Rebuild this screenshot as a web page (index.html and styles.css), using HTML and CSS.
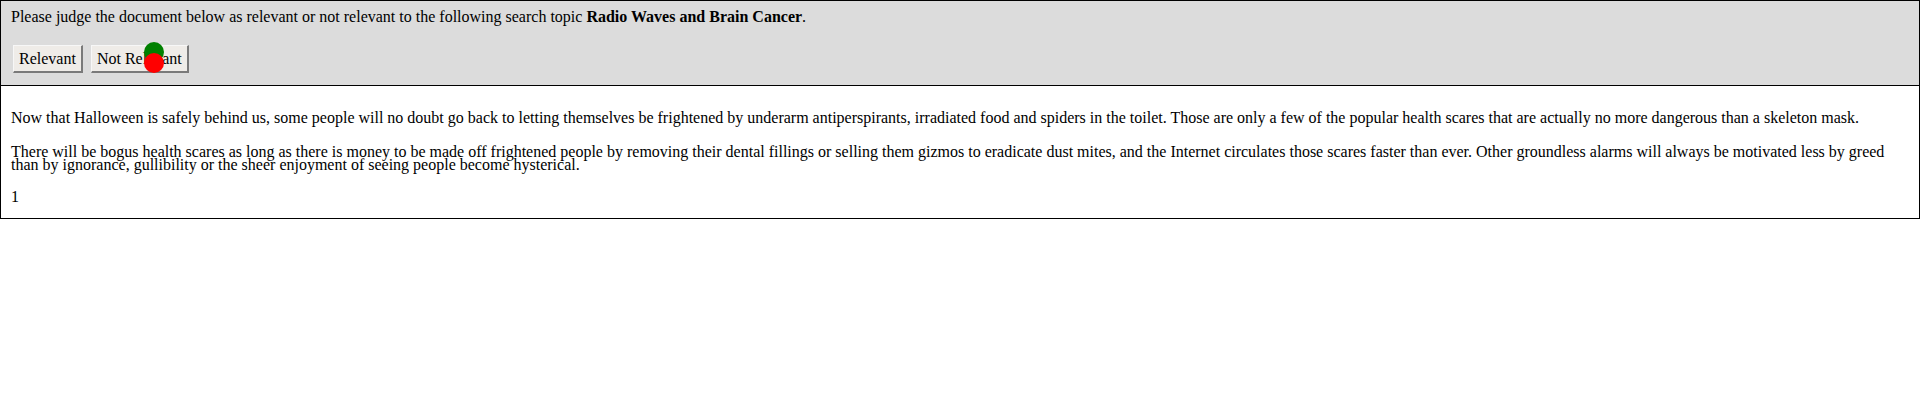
FILE: index.html
```html
<!DOCTYPE html>
<html>
<head>
<meta charset="utf-8">
<link rel="stylesheet" href="styles.css">
</head>
<body>
<div class="topic">
  <p class="question">Please judge the document below as relevant or not relevant to the following search topic <b>Radio Waves and Brain Cancer</b>.</p>
  <div class="actions">
    <button class="btn">Relevant</button>
    <button class="btn">Not Relevant</button>
  </div>
  <span class="dot dot-green"></span>
  <span class="dot dot-red"></span>
</div>
<div class="doc">
  <p class="para">Now that Halloween is safely behind us, some people will no doubt go back to letting themselves be frightened by underarm antiperspirants, irradiated food and spiders in the toilet. Those are only a few of the popular health scares that are actually no more dangerous than a skeleton mask.</p>
  <p class="para tight">There will be bogus health scares as long as there is money to be made off frightened people by removing their dental fillings or selling them gizmos to eradicate dust mites, and the Internet circulates those scares faster than ever. Other groundless alarms will always be motivated less by greed than by ignorance, gullibility or the sheer enjoyment of seeing people become hysterical.</p>
  <p class="para last">1</p>
</div>
</body>
</html>
```

FILE: styles.css
```css
html, body {
  margin: 0;
  padding: 0;
  background: #ffffff;
}
body {
  font-family: "Liberation Serif", "Times New Roman", serif;
  font-size: 16px;
  color: #000000;
}
.topic {
  position: relative;
  background: #dcdcdc;
  border: 1px solid #000000;
  padding: 7px 10px 12px 10px;
}
.question {
  margin: 0;
  line-height: 18px;
}
.actions {
  display: flex;
  gap: 8px;
  margin-top: 19px;
  padding-left: 2px;
}
.btn {
  font-family: "Liberation Serif", "Times New Roman", serif;
  font-size: 16px;
  color: #000000;
  height: 28px;
  padding: 0 5px;
  margin: 0;
  background: #efece8;
  border-style: solid;
  border-width: 1px 2px 2px 1px;
  border-color: #f7f7f7 #7a7a7a #7a7a7a #f7f7f7;
  border-radius: 0;
  line-height: 1;
}
.dot {
  position: absolute;
  width: 20px;
  height: 20px;
  border-radius: 50%;
  left: 143px;
}
.dot-green {
  top: 41px;
  background: #008000;
}
.dot-red {
  top: 52px;
  background: #ff0000;
}
.doc {
  border: 1px solid #000000;
  border-top: 0;
  padding: 7px 10px 0 10px;
}
.para {
  margin: 16px 0;
  line-height: 18px;
}
.tight {
  line-height: 13px;
  padding: 2px 0 1px 0;
}
.last {
  margin-bottom: 12px;
}
```
